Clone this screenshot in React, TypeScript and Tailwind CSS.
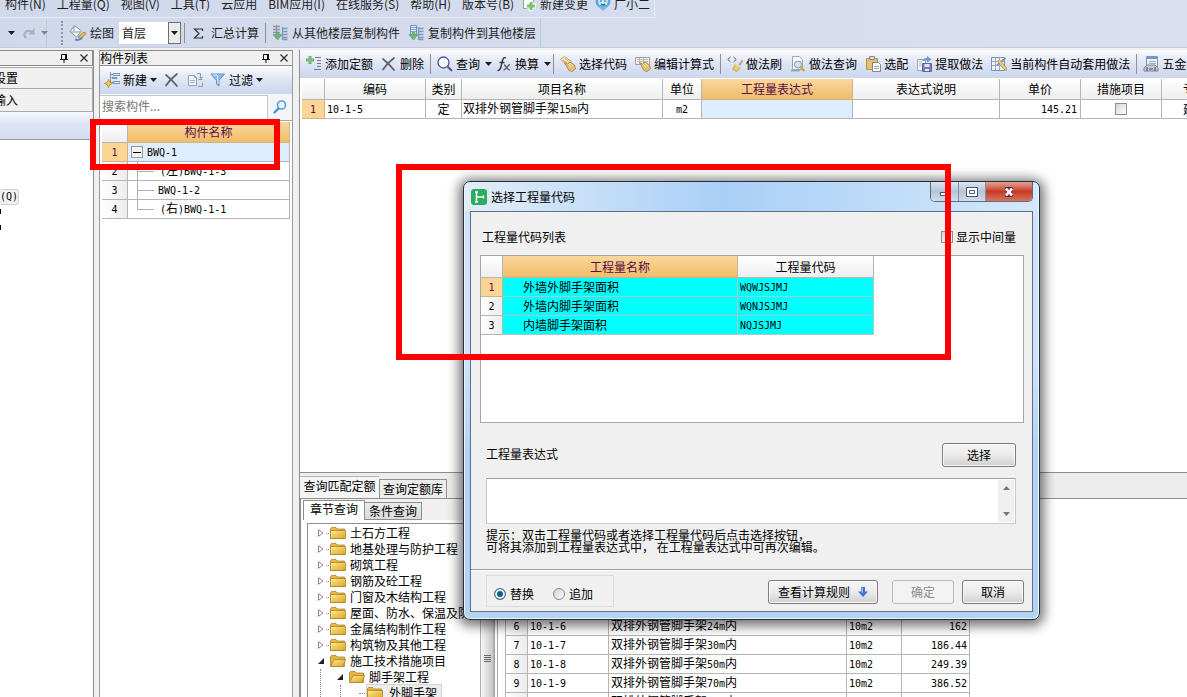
import React from "react";

type Kids = { children?: React.ReactNode };

const HEAD = "h-[21px] border-r border-b border-[#b5b5b5] bg-linear-to-b from-white to-[#eeeeee] p-0 text-center font-normal";
const HEAD_ON = "h-[21px] border-r border-b border-[#c9b48c] bg-linear-to-b from-[#f9d79c] to-[#efbd68] p-0 text-center font-normal text-[#5c0a46]";
const INDEX = "h-[19px] border-r border-b border-[#b5b5b5] bg-linear-to-r from-white to-[#ececec] p-0 text-center font-normal";
const INDEX_ON = "h-[19px] border-r border-b border-[#c9b48c] bg-[#fcd594] p-0 text-center font-normal text-[#5c0a46]";
const CELL = "h-[19px] overflow-hidden border-r border-b border-[#b5b5b5] p-0 whitespace-nowrap";
const BUTTON = "flex h-6 items-center justify-center rounded-[3px] border border-[#7c7c7c] bg-linear-to-b from-[#f5f5f5] via-[#ebebeb] via-50% to-[#cfcfcf] shadow-[inset_0_0_0_1px_#fafafa]";

/* Sets Latin runs in a half-width monospace beside full-width Chinese text. */
function Mixed({ text }: { text: string }) {
  return (
    <>
      {text.split(/([\x20-\x7e]+)/).map((run, i) =>
        i % 2 ? (
          <span key={i} className="font-['DejaVu_Sans_Mono',monospace] text-[10px]">{run}</span>
        ) : (
          run
        ),
      )}
    </>
  );
}

function Icon({ children }: Kids) {
  return (
    <svg viewBox="0 0 16 16" className="h-4 w-4 shrink-0" fill="none" aria-hidden="true">
      {children}
    </svg>
  );
}

const Caret = ({ faded }: { faded?: boolean }) => (
  <svg viewBox="0 0 7 4" className={faded ? "h-1 w-[7px] shrink-0 text-[#7d8593]" : "h-1 w-[7px] shrink-0 text-[#1c1c1c]"} aria-hidden="true">
    <path d="M0 0h7L3.500 4z" fill="currentColor" />
  </svg>
);

const Sep = () => <span className="-mx-0.5 h-5 w-px shrink-0 bg-[#8d9099]" />;

const PinIcon = () => (
  <svg viewBox="0 0 8 10" className="h-[10px] w-2" fill="none" aria-hidden="true">
    <path d="M1.500 6V1.500h5V6M0 6.500h8M4 7v3" stroke="#111" />
    <path d="M5 1h2v5H5z" fill="#111" />
  </svg>
);
const CloseIcon = () => (
  <svg viewBox="0 0 8 8" className="h-2 w-2" fill="none" aria-hidden="true">
    <path d="M.5.5l7 7M7.500.5l-7 7" stroke="#222" strokeWidth="1.100" />
  </svg>
);
const CrossIcon = () => (
  <Icon>
    <path d="M2 3c4 3 7 6 11 11M13 2C9 5 5 9 2 13.500" stroke="#5d6167" strokeWidth="1.700" strokeLinecap="round" />
  </Icon>
);
const AddRowIcon = () => (
  <Icon>
    <path d="M4 0v8M0 4h8" stroke="#69ad71" strokeWidth="3" />
    <path d="M4 1v6M1 4h6" stroke="#8fc795" />
    <path d="M9 1.500h6M11 4.500h4M11 7.500h4M11 10.500h4M8 13.500h7" stroke="#747b85" />
  </Icon>
);
const NewIcon = () => (
  <Icon>
    <path d="M6.500 0v12M7 2.500h2M7 10.500h2" stroke="#8795aa" />
    <path d="M9 1.500h7v2H9zM8 5.500h5v1H8zM9 9.500h7v2H9z" fill="#dbe6f3" stroke="#718cae" strokeWidth=".9" />
    <path d="M4.500 7.500l1.200 2.700L8.500 11.500l-2.800 1.300-1.200 2.700-1.200-2.700L.5 11.500l2.800-1.300z" fill="#f6c844" stroke="#b48b25" strokeWidth=".8" />
  </Icon>
);
const CopyIcon = () => (
  <Icon>
    <path d="M1.500 3.500h6l2 2v8h-8zM7.500 3.500v2h2" fill="#eef3f8" stroke="#93a2b7" />
    <path d="M3 8.500h5M3 10.500h5" stroke="#a7b3c3" />
    <path d="M10 1.500h3.500V5M11 14.500h4.500v-4M11.500 7.500h4" stroke="#8ba0bd" />
    <path d="M12 5h4l-2 2.500z" fill="#8ba0bd" />
  </Icon>
);
const FunnelIcon = () => (
  <Icon>
    <path d="M1 2h13.500L9 8.500v5.500L6.500 12V8.500z" fill="#8db9e9" stroke="#6790bf" />
    <path d="M3 3h4l1 5v4" stroke="#d9ecff" />
  </Icon>
);
const SearchIcon = () => (
  <Icon>
    <circle cx="6.500" cy="6.500" r="5.500" fill="#f4f9ff" stroke="#4a569a" strokeWidth="1.300" />
    <path d="M10.500 10.500l4.500 4.500" stroke="#4d5a91" strokeWidth="2" />
  </Icon>
);
const FxIcon = () => (
  <Icon>
    <path d="M1.500 14.500c3 .5 3.500-3 4.500-8s2-5.500 4-4.500M3.500 6.500h5" stroke="#31353c" strokeWidth="1.400" />
    <path d="M8 9c2 0 3 5 6 5M14 8.500c-2 0-4 5.500-6.500 5.500" stroke="#596069" strokeWidth="1.300" />
  </Icon>
);
const HandIcon = ({ sheet }: { sheet?: boolean }) => (
  <Icon>
    {sheet ? (
      <>
        <path d="M.5 1.500h14v7H.5z" fill="#f0f1ea" stroke="#a0a099" />
        <path d="M2 3.500h11M2 5.500h11M4.500 2v6M8.500 2v6" stroke="#bcbfae" />
      </>
    ) : (
      <>
        <path d="M.5 3.500l4-3 7 5-4 4z" fill="#f3e3b2" stroke="#c2a46a" />
        <path d="M3 4l4 3M5 2.500l4 3" stroke="#c9b07a" />
      </>
    )}
    <path d="M4.500 6.500l3 1.500 2.500-2 4.500 3 1 4-3.500 2.500-3-1z" fill="#e9bf72" stroke="#b18a4d" />
    <path d="M8 8l3 3M10 7l3 3" stroke="#fae4b5" />
  </Icon>
);
const BrushIcon = () => (
  <Icon>
    <path d="M3.500 1L.8 3.500l2.700 2.500M6.500 1l2.700 2.500L6.500 6" stroke="#555b63" />
    <path d="M15.500 4.500l-3.500 5" stroke="#c3a27d" strokeWidth="2" />
    <path d="M8.500 8l5 3-3.500 4.500-4.500-2z" fill="#f2cb65" stroke="#c9a450" />
    <path d="M8.500 8l5 3" stroke="#d9dde6" strokeWidth="2" />
  </Icon>
);
const PageSearchIcon = () => (
  <Icon>
    <path d="M2.500.5h7l3 3v10h-10z" fill="#f8fafc" stroke="#9ba6b4" />
    <path d="M1 14.500h9" stroke="#98afa5" strokeWidth="2" />
    <circle cx="8" cy="8.500" r="3.500" fill="#cde6f5" stroke="#8196a8" />
    <path d="M10.500 11l4 4" stroke="#d1a342" strokeWidth="2.200" />
  </Icon>
);
const PasteIcon = () => (
  <Icon>
    <path d="M1.500 2.500h11v11h-11z" fill="#e6c06c" stroke="#b8924a" />
    <path d="M4.500.5h5v3h-5z" fill="#d9dee5" stroke="#838891" />
    <path d="M7.500 6.500h6l2 2v7h-8z" fill="#f7f9fb" stroke="#7f8793" />
    <path d="M9 10.500h5M9 12.500h5" stroke="#aab0ba" />
  </Icon>
);
const ExtractIcon = () => (
  <Icon>
    <path d="M1.500 3.500h8v11h-8z" fill="#fafbfd" stroke="#a1a9b6" />
    <path d="M3 6h3M3 8h3M3 10h3" stroke="#adb5c1" />
    <path d="M6.500 7.500h9v8h-9z" fill="#7080b4" stroke="#5d6a9b" />
    <path d="M8.500 8h5v3h-5zM9 13h4v2H9z" fill="#e4e8f4" />
    <path d="M6 5.500c1-3 3-3.500 5-3.500V0l4.500 3.500L11 6.500v-2c-2 0-3 0-5 1z" fill="#7394c9" />
  </Icon>
);
const GridPenIcon = () => (
  <Icon>
    <path d="M.5 1.500h13v13H.5z" fill="#eef4fb" stroke="#7392bb" />
    <path d="M1 5.500h12M1 9.500h12M4.500 2v12M8.500 2v12" stroke="#92abc9" />
    <path d="M14.500 2L6 9" stroke="#74839f" strokeWidth="1.500" />
    <path d="M6.500 5l2-1.500 6.500 8 .5 3-2.800-1.500z" fill="#eccf73" stroke="#a98f4e" strokeWidth=".8" />
  </Icon>
);
const CalcIcon = () => (
  <Icon>
    <path d="M3.500.5h11v10h-11z" fill="#eaf1fa" stroke="#7e94b4" />
    <path d="M4 2h10" stroke="#6f99cf" strokeWidth="2" />
    <path d="M6 5.500h7M6 7.500h7" stroke="#9cadc3" />
    <path d="M1 12l3-3h8l3 3v3H1z" fill="#c5cbd5" stroke="#7c8490" />
    <path d="M4 11v4M12 11v4M6 13h4" stroke="#6b727d" strokeWidth="1.500" />
  </Icon>
);
const PaintIcon = () => (
  <svg viewBox="0 0 18 16" className="h-4 w-[18px] shrink-0" fill="none" aria-hidden="true">
    <path d="M5.500.5l7 5.500-5 6-6.500-5.500z" fill="#f3f6fa" stroke="#8796aa" />
    <path d="M5 1v5M1.500 7L11 7" stroke="#8796aa" />
    <path d="M9 12l6-5 2 1.500-5 5.500z" fill="#e6bf4f" stroke="#a98b3d" />
    <path d="M6 14.500c3 1 6 0 7-2" stroke="#5d88c0" strokeWidth="2" />
  </svg>
);
const FloorIcon = ({ out }: { out?: boolean }) => (
  <Icon>
    {out ? (
      <>
        <path d="M2.500.5h6v9h-6z" fill="#e5effa" stroke="#6d93c0" />
        <path d="M3 2.500h5M3 4.500h5M3 6.500h5" stroke="#7fa2cd" />
      </>
    ) : (
      <path d="M1 1.500h7M1 4.500h7M1 7.500h7M4.500 0v9" stroke="#8f98a3" strokeWidth="1.500" />
    )}
    <path d="M1 9.500h3v-2h3v2h3L5.500 15z" fill="#71b47d" stroke="#5f9f6e" strokeWidth=".7" />
    <path d="M10.500 2v13M11 3.500h4.500M11 6.500h4.500M11 9.500h4.500M11 12.500h4.500M11 14.500h4.500" stroke="#7c9abd" strokeWidth="1.300" />
  </Icon>
);
const ChangeIcon = () => (
  <Icon>
    <path d="M2.500-1h7l3 3v10.500h-10z" fill="#fafcf8" stroke="#8ea38b" />
    <path d="M10 5v10M5 10h10" stroke="#fff" strokeWidth="5" />
    <path d="M10 6v8M6 10h8" stroke="#79c267" strokeWidth="3" />
  </Icon>
);
const MascotIcon = () => (
  <Icon>
    <circle cx="8" cy="5" r="7.500" fill="#5aa9de" />
    <path d="M3 4c2-3 8-3 10 0l-1 5H4z" fill="#c6e8f8" />
    <path d="M5 5h2M9 5h2M6 8c1 1 3 1 4 0" stroke="#246b9e" strokeWidth="1.200" />
    <path d="M3 10.500l5 4.500 5-4.500" fill="#79b9e2" />
  </Icon>
);

function Folder({ open }: { open?: boolean }) {
  return (
    <svg viewBox="0 0 16 12" className="h-3 w-4 shrink-0" fill="none" aria-hidden="true">
      <defs>
        <linearGradient id="gold" x1="0" y1="0" x2="1" y2="1">
          <stop offset="0" stopColor="#fdeb9c" />
          <stop offset="1" stopColor="#dfa41c" />
        </linearGradient>
      </defs>
      <path d="M.5 11.500V1.500l1-1h4.500l1.500 1.500h7v9.500z" fill="#e5b83c" stroke="#a9852c" strokeWidth=".8" />
      {open ? (
        <path d="M4 4.500h11.700l-3 7H.7z" fill="url(#gold)" stroke="#a9852c" strokeWidth=".8" />
      ) : (
        <path d="M.5 3.500h15v8H.5z" fill="url(#gold)" stroke="#a9852c" strokeWidth=".8" />
      )}
    </svg>
  );
}

function Tool({ icon, label, menu }: { icon: React.ReactNode; label: string; menu?: boolean }) {
  return (
    <button className={menu ? "-mr-1 flex shrink-0 items-center gap-[3px]" : "flex shrink-0 items-center gap-[3px]"}>
      {icon}
      <span>{label}</span>
      {menu && <span className="pl-0.5"><Caret /></span>}
    </button>
  );
}

function TopBars() {
  const menus = ["构件(N)", "工程量(Q)", "视图(V)", "工具(T)", "云应用", "BIM应用(I)", "在线服务(S)", "帮助(H)", "版本号(B)"];
  return (
    <header className="shrink-0 border-b border-[#c3cbdc] bg-linear-to-r from-[#d0d8eb] to-[#d9e0ef] text-[#1e1e1e]">
      <nav className="flex h-[18px] w-max items-start gap-[11px] border-r border-b border-[#e7ecf6] pr-1 pl-[5px] leading-2">
        {menus.map((m) => (
          <button key={m} className="h-2 leading-2 whitespace-nowrap">{m}</button>
        ))}
        <button className="-mr-1 -ml-1 flex h-2 items-center gap-[3px] leading-2 whitespace-nowrap"><ChangeIcon />新建变更</button>
        <button className="flex h-2 items-center gap-[3px] leading-2 whitespace-nowrap"><MascotIcon />广小二</button>
      </nav>
      <div className="flex h-[29px] w-max items-center border-r border-[#bcc5d9] pt-px pr-1">
        <div className="flex h-full w-[47px] items-center gap-2 border-r border-[#bfc8dc] pl-2">
          <button aria-label="撤销"><Caret /></button>
          <button aria-label="恢复" className="flex items-center gap-1.5">
            <svg viewBox="0 0 12 12" className="h-3 w-3" fill="none" aria-hidden="true">
              <path d="M3 11C-1 6 4 2 9 5" stroke="#a9b1c0" strokeWidth="2.200" />
              <path d="M11.500 1v6.500H5.500z" fill="#a9b1c0" />
            </svg>
            <Caret faded />
          </button>
        </div>
        <span className="mr-1.5 ml-[14px] h-6 border-l-2 border-dotted border-[#8e99b0]" />
        <button className="flex items-center gap-[3px]"><PaintIcon />绘图</button>
        <div className="relative mx-[5px] h-[22px] w-[62px] bg-white">
          <select aria-label="楼层" className="h-full w-full appearance-none pl-[3px] text-[12px] outline-none">
            <option>首层</option>
          </select>
          <span className="pointer-events-none absolute top-0 right-0 flex h-[22px] w-[13px] items-center justify-center border border-[#6e6e6e] bg-[#ececec]"><Caret /></span>
        </div>
        <div className="flex items-center gap-2">
          <Sep />
          <button className="flex items-center gap-[7px] pl-0.5">
            <svg viewBox="0 0 11 11" className="h-[11px] w-[11px]" fill="none" aria-hidden="true">
              <path d="M9.500 3V1H1.500L6 5.500 1.500 10h8V8" stroke="#333" strokeWidth="1.200" />
            </svg>
            汇总计算
          </button>
          <Sep />
          <button className="flex items-center gap-1"><FloorIcon />从其他楼层复制构件</button>
          <button className="flex items-center gap-1"><FloorIcon out />复制构件到其他楼层</button>
        </div>
      </div>
    </header>
  );
}

function LeftDock() {
  return (
    <aside className="w-[94px] shrink-0 overflow-hidden border-r border-[#8f8f8f] bg-white">
      <div className="flex h-4 items-center justify-end gap-3 border border-l-0 border-[#8a8a8a] bg-[#efefef] pr-1">
        <button aria-label="固定"><PinIcon /></button>
        <button aria-label="关闭"><CloseIcon /></button>
      </div>
      <button className="mt-px flex h-[22px] w-full items-center border border-l-0 border-[#a9a9a9] bg-[#f0f0f0]"><span className="-ml-1.5">设置</span></button>
      <button className="flex h-[23px] w-full items-center border-r border-b border-[#a9a9a9] bg-[#f0f0f0]"><span className="-ml-1.5">输入</span></button>
      <div className="h-7 border-b border-[#8f99ad] bg-linear-to-b from-[#f7f9fd] via-[#dfe6f6] via-40% to-[#d3dcf0]" />
      <div className="pt-[49px]">
        <button className="flex h-4 w-[19px] items-center rounded-[3px] border border-l-0 border-[#cfcfcf] bg-[#f1f1f1] font-['DejaVu_Sans_Mono',monospace] text-[10px]">(Q)</button>
        <div className="mt-1 h-[5px] w-px bg-black" />
        <div className="mt-[11px] h-[5px] w-px bg-black" />
      </div>
    </aside>
  );
}

function Components() {
  const rows = ["(左)BWQ-1-3", "BWQ-1-2", "(右)BWQ-1-1"];
  return (
    <section className="w-[194px] shrink-0 border-r border-l border-[#9a9a9a] bg-white">
      <div className="flex h-4 items-center border-y border-[#8a8a8a] bg-[#efefef]">
        <h2 className="flex-1">构件列表</h2>
        <div className="flex items-center gap-[10px] pr-1">
          <button aria-label="固定"><PinIcon /></button>
          <button aria-label="关闭"><CloseIcon /></button>
        </div>
      </div>
      <div className="flex h-7 items-center gap-[7px] bg-linear-to-b from-[#fafbfe] via-[#dde4f4] to-[#ccd6ed] pl-1">
        <button className="flex items-center gap-[3px]"><NewIcon />新建<Caret /></button>
        <button aria-label="删除"><CrossIcon /></button>
        <button aria-label="复制"><CopyIcon /></button>
        <button className="flex items-center gap-[3px]"><FunnelIcon />过滤<Caret /></button>
      </div>
      <div className="flex h-[27px] items-center border-b border-[#aaa] bg-[#f3f5f9]">
        <input aria-label="搜索构件" placeholder="搜索构件..." className="h-[25px] w-0 flex-1 border-y border-r border-[#c3c8d0] bg-white px-0.5 pb-1 placeholder:text-[#777]" />
        <button aria-label="搜索" className="flex w-6 justify-center">
          <svg viewBox="0 0 14 14" className="h-[14px] w-[14px]" fill="none" aria-hidden="true">
            <circle cx="8.500" cy="5" r="4" stroke="#49a3df" strokeWidth="1.600" />
            <path d="M5.500 8.500l-4 4" stroke="#3b8fce" strokeWidth="2.200" strokeLinecap="round" />
          </svg>
        </button>
      </div>
      <table className="mt-px ml-0.5 w-[188px] table-fixed border-separate border-spacing-0">
        <colgroup><col className="w-[26px]" /><col /></colgroup>
        <thead><tr><th className={HEAD} /><th className={HEAD_ON}>构件名称</th></tr></thead>
        <tbody>
          <tr>
            <th className={INDEX_ON}><Mixed text="1" /></th>
            <td className={CELL + " bg-[#dfeefe]"}>
              <div className="flex items-center gap-1 pl-[3px]">
                <button aria-label="折叠" className="flex h-3 w-3 items-center justify-center border border-[#999] bg-[#f2f2f2]"><span className="h-px w-2 bg-black" /></button>
                <span><Mixed text="BWQ-1" /></span>
              </div>
            </td>
          </tr>
          {rows.map((r, i) => (
            <tr key={r}>
              <th className={INDEX}><Mixed text={String(i + 2)} /></th>
              <td className={CELL}>
                <div className="flex h-[18px] items-center pl-[9px]">
                  <span className={i === 2 ? "h-[10px] self-start border-l border-[#b0b0b0]" : "h-full border-l border-[#b0b0b0]"} />
                  <span className="h-px w-4 bg-[#b0b0b0]" />
                  <span className={i === 1 ? "pl-1" : "pl-1.5"}><Mixed text={r} /></span>
                </div>
              </td>
            </tr>
          ))}
        </tbody>
      </table>
    </section>
  );
}

function QuotaToolbar() {
  return (
    <div className="flex h-7 shrink-0 items-center gap-2 overflow-hidden bg-linear-to-b from-[#fafbfe] via-[#dde4f4] to-[#ccd6ed] pl-1.5 whitespace-nowrap">
      <Tool icon={<AddRowIcon />} label="添加定额" />
      <Tool icon={<CrossIcon />} label="删除" />
      <Sep />
      <Tool icon={<SearchIcon />} label="查询" menu />
      <Tool icon={<FxIcon />} label="换算" menu />
      <Sep />
      <Tool icon={<HandIcon />} label="选择代码" />
      <Tool icon={<HandIcon sheet />} label="编辑计算式" />
      <Sep />
      <Tool icon={<BrushIcon />} label="做法刷" />
      <Tool icon={<PageSearchIcon />} label="做法查询" />
      <Tool icon={<PasteIcon />} label="选配" />
      <Tool icon={<ExtractIcon />} label="提取做法" />
      <Tool icon={<GridPenIcon />} label="当前构件自动套用做法" />
      <Sep />
      <Tool icon={<CalcIcon />} label="五金手册" />
    </div>
  );
}

function QuotaTable() {
  return (
    <div className="min-h-0 flex-1 overflow-hidden border-b border-[#8f8f8f] bg-white pt-px pl-0.5">
      <table className="w-[927px] table-fixed border-separate border-spacing-0">
        <colgroup>
          <col className="w-[23px]" /><col className="w-[101px]" /><col className="w-[36px]" /><col className="w-[201px]" /><col className="w-[39px]" />
          <col className="w-[151px]" /><col className="w-[147px]" /><col className="w-[81px]" /><col className="w-[81px]" /><col className="w-[67px]" />
        </colgroup>
        <thead>
          <tr>
            <th className={HEAD} />
            <th className={HEAD}>编码</th>
            <th className={HEAD}>类别</th>
            <th className={HEAD}>项目名称</th>
            <th className={HEAD}>单位</th>
            <th className={HEAD_ON}>工程量表达式</th>
            <th className={HEAD}>表达式说明</th>
            <th className={HEAD}>单价</th>
            <th className={HEAD}>措施项目</th>
            <th className={HEAD}>专业</th>
          </tr>
        </thead>
        <tbody>
          <tr>
            <th className={INDEX_ON}><Mixed text="1" /></th>
            <td className={CELL + " pl-0.5"}><Mixed text="10-1-5" /></td>
            <td className={CELL + " text-center"}>定</td>
            <td className={CELL + " pl-px"}><Mixed text="双排外钢管脚手架15m内" /></td>
            <td className={CELL + " text-center"}><Mixed text="m2" /></td>
            <td className={CELL + " bg-[#dfeefe]"} />
            <td className={CELL} />
            <td className={CELL + " pr-[3px] text-right"}><Mixed text="145.21" /></td>
            <td className={CELL}>
              <input type="checkbox" aria-label="措施项目" className="mx-auto block h-3 w-3 appearance-none border border-[#8f8f8f] bg-linear-to-br from-[#d5d5d5] to-white" />
            </td>
            <td className={CELL + " text-center"}>建筑</td>
          </tr>
        </tbody>
      </table>
    </div>
  );
}

function Tree() {
  const items = ["土石方工程", "地基处理与防护工程", "砌筑工程", "钢筋及砼工程", "门窗及木结构工程", "屋面、防水、保温及防腐工程", "金属结构制作工程", "构筑物及其他工程"];
  const opened = (
    <svg viewBox="0 0 6 6" className="h-1.5 w-1.5 shrink-0" aria-hidden="true"><path d="M6 0v6H0z" fill="#222" /></svg>
  );
  return (
    <ul className="mt-[3px] ml-1 h-full overflow-hidden border-t border-l border-[#8f8f8f] bg-white pt-px whitespace-nowrap">
      {items.map((t) => (
        <li key={t} className="flex h-4 items-center pl-[10px]">
          <svg viewBox="0 0 6 8" className="h-2 w-1.5 shrink-0" fill="none" aria-hidden="true"><path d="M.5.7v6.600L5 4z" stroke="#8a8a8a" /></svg>
          <span className="mr-px ml-0.5 w-[3px] shrink-0 border-t border-dotted border-[#888]" />
          <Folder />
          <span className="pl-1">{t}</span>
        </li>
      ))}
      <li className="flex h-4 items-center gap-1.5 pl-[10px]">{opened}<Folder open /><span className="-ml-0.5">施工技术措施项目</span></li>
      <li className="ml-3 border-l border-dotted border-[#888]">
        <div className="flex h-4 items-center gap-1.5 pl-4">{opened}<Folder open /><span className="-ml-0.5">脚手架工程</span></div>
        <div className="ml-[19px] flex h-4 items-center border-l border-dotted border-[#888] pl-[18px]">
          <span className="w-2 border-t border-dotted border-[#888]" />
          <button className="flex items-center gap-1.5 bg-[#ededed] pr-1 outline outline-[#d4d4d4]"><Folder />外脚手架</button>
        </div>
      </li>
    </ul>
  );
}

function QueryPane() {
  const rows = [
    ["6", "10-1-6", "双排外钢管脚手架24m内", "162"],
    ["7", "10-1-7", "双排外钢管脚手架30m内", "186.44"],
    ["8", "10-1-8", "双排外钢管脚手架50m内", "249.39"],
    ["9", "10-1-9", "双排外钢管脚手架70m内", "386.52"],
    ["10", "10-1-10", "双排外钢管脚手架90m内", "520.18"],
  ];
  return (
    <div className="flex h-[224px] shrink-0 flex-col overflow-hidden">
      <div className="flex h-[26px] shrink-0 items-end border-b border-[#8f8f8f] bg-[#ededed] pt-1">
        <button className="h-[22px] w-[79px] border-t border-[#b5b5b5] bg-[#f5f5f5] pb-1 text-center">查询匹配定额</button>
        <button className="h-[19px] w-[68px] border border-b-0 border-[#8f8f8f] bg-[#ececec] text-center">查询定额库</button>
      </div>
      <div className="flex min-h-0 flex-1 bg-white">
        <div className="flex w-[180px] shrink-0 flex-col overflow-hidden border-l border-[#8f8f8f] bg-white pl-0.5">
          <div className="flex h-[21px] shrink-0 items-end bg-[#f0f0f0]">
            <button className="h-5 w-[62px] border border-b-0 border-[#8f8f8f] bg-white pb-1 text-center">章节查询</button>
            <button className="h-[18px] w-[57px] border border-l-0 border-[#8f8f8f] bg-linear-to-b from-[#ededed] to-[#dadada] text-center">条件查询</button>
          </div>
          <Tree />
        </div>
        <div className="flex w-[14px] shrink-0 items-center justify-center border-x border-[#b0b0b0] bg-linear-to-r from-[#f6f6f6] to-[#c8c8c8]">
          <div className="mt-30 flex flex-col gap-px">
            <span className="h-px w-[7px] bg-[#666]" /><span className="h-px w-[7px] bg-[#666]" /><span className="h-px w-[7px] bg-[#666]" /><span className="h-px w-[7px] bg-[#666]" />
          </div>
        </div>
        <div className="min-w-0 flex-1 border-l-4 border-double border-[#a5a5a5] pt-[118px]">
          <table className="ml-[7px] w-[465px] table-fixed border-separate border-spacing-0 border-l border-[#b5b5b5]">
            <colgroup><col className="w-[22px]" /><col className="w-[81px]" /><col className="w-[238px]" /><col className="w-[55px]" /><col /></colgroup>
            <tbody>
              {rows.map(([n, code, name, price]) => (
                <tr key={n}>
                  <th className={INDEX}><Mixed text={n} /></th>
                  <td className={CELL + " pl-0.5"}><Mixed text={code} /></td>
                  <td className={CELL + " pl-0.5"}><Mixed text={name} /></td>
                  <td className={CELL + " pl-0.5"}><Mixed text="10m2" /></td>
                  <td className={CELL + " pr-0.5 text-right"}><Mixed text={price} /></td>
                </tr>
              ))}
            </tbody>
          </table>
        </div>
      </div>
    </div>
  );
}

function CodeDialog() {
  const codes = [["外墙外脚手架面积", "WQWJSJMJ"], ["外墙内脚手架面积", "WQNJSJMJ"], ["内墙脚手架面积", "NQJSJMJ"]];
  const cyan = "h-[19px] border-r border-b border-[#a9c9c9] bg-[#00ffff] p-0";
  const radio = "h-3 w-3 appearance-none rounded-full border border-[#8a8a8a] bg-linear-to-br from-[#cfcfcf] to-white checked:border-[#54708a] checked:bg-none checked:bg-[#125f8c] checked:shadow-[inset_0_0_0_2px_#e8f1f7]";
  return (
    <div role="dialog" aria-label="选择工程量代码" className="absolute top-[181px] left-[463px] w-[577px] rounded-[7px] border border-[#22303f] bg-linear-to-b from-[#cfe4fa] from-40% to-[#b4d3f4] to-60% px-1.5 pb-[7px] shadow-[0_2px_12px_4px_rgba(0,0,0,0.55),inset_0_0_0_1px_#eef7ff]">
      <div className="-mx-[5px] flex h-[29px] items-start rounded-t-md bg-linear-to-r from-[#e2edf8] via-[#a9cff6] via-45% to-[#d5e8fb] pr-[5px] pl-1.5">
        <div className="flex h-full flex-1 items-center gap-1">
          <svg viewBox="0 0 16 16" className="h-4 w-4" fill="none" aria-hidden="true">
            <rect width="16" height="16" rx="3" fill="#2cab61" />
            <path d="M4 3h3M5.500 3v10M4 13h3M6 8h7M12.500 6.500v3" stroke="#fff" strokeWidth="1.500" />
          </svg>
          <h2>选择工程量代码</h2>
        </div>
        <div className="flex h-5 overflow-hidden rounded-b-[5px] border border-t-0 border-[#5b6c82]">
          <button aria-label="最小化" className="flex w-7 items-center justify-center border-r border-[#7f90a6] bg-linear-to-b from-[#dce5ef] via-[#b6c5d5] to-[#d0deeb]"><span className="mt-1 h-1 w-[10px] border border-[#4b5a6e] bg-white" /></button>
          <button aria-label="最大化" className="flex w-[27px] items-center justify-center border-r border-[#7f90a6] bg-linear-to-b from-[#dce5ef] via-[#b6c5d5] to-[#d0deeb]">
            <svg viewBox="0 0 12 10" className="h-[10px] w-3" fill="none" aria-hidden="true"><path d="M.5.5h11v9H.5zM3.500 3.500h5v3h-5z" fill="#fff" stroke="#4b5a6e" /></svg>
          </button>
          <button aria-label="关闭" className="flex w-[46px] items-center justify-center bg-linear-to-b from-[#e0a294] via-[#c43a25] to-[#d9745c]">
            <svg viewBox="0 0 12 10" className="h-[10px] w-3" fill="none" aria-hidden="true">
              <path d="M2 1h2.500L6 3l1.500-2H10M2 9h2.500L6 7l1.500 2H10M3 1l5.500 8M9 1L3.500 9" stroke="#5e3640" strokeWidth="3.200" />
              <path d="M3 1.500l6 7M9 1.500l-6 7" stroke="#fff" strokeWidth="2.600" />
            </svg>
          </button>
        </div>
      </div>
      <div className="border border-[#5d7087] bg-[#f0f0f0]">
        <div className="flex h-[43px] items-center justify-between pt-1.5 pr-4 pl-[11px]">
          <span>工程量代码列表</span>
          <label className="flex items-center gap-[3px]">
            <input type="checkbox" className="h-3 w-3 appearance-none border border-[#8f8f8f] bg-linear-to-br from-[#d5d5d5] to-white" />
            显示中间量
          </label>
        </div>
        <div className="mr-2 ml-[9px] h-[168px] border border-[#a6a6a6] bg-white">
          <table className="w-[393px] table-fixed border-separate border-spacing-0">
            <colgroup><col className="w-[22px]" /><col className="w-[235px]" /><col /></colgroup>
            <thead><tr><th className={HEAD + " h-[22px]"} /><th className={HEAD_ON}>工程量名称</th><th className={HEAD}>工程量代码</th></tr></thead>
            <tbody>
              {codes.map(([name, code], i) => (
                <tr key={code}>
                  <th className={i === 0 ? INDEX_ON : INDEX}><Mixed text={String(i + 1)} /></th>
                  <td className={cyan + " pl-5"}>{name}</td>
                  <td className={cyan + " pl-0.5"}><Mixed text={code} /></td>
                </tr>
              ))}
            </tbody>
          </table>
        </div>
        <div className="flex h-[55px] items-center justify-between pt-2 pr-4 pl-[15px]">
          <label htmlFor="expression" className="pb-0.5">工程量表达式</label>
          <button className={BUTTON + " w-[74px]"}>选择</button>
        </div>
        <div className="mr-4 ml-[15px] flex h-[46px] border border-[#c9c9c9] border-t-[#9f9f9f] bg-white">
          <textarea id="expression" className="w-0 flex-1 resize-none outline-none" />
          <div className="my-px mr-px flex w-4 flex-col items-center justify-between bg-[#f0f0f0] py-1.5">
            <svg viewBox="0 0 7 4" className="h-1 w-[7px]" aria-hidden="true"><path d="M0 4h7L3.500 0z" fill="#777" /></svg>
            <svg viewBox="0 0 7 4" className="h-1 w-[7px]" aria-hidden="true"><path d="M0 0h7L3.500 4z" fill="#777" /></svg>
          </div>
        </div>
        <p className="h-[45px] pt-[5px] pl-[15px] leading-3">
          提示：双击工程量代码或者选择工程量代码后点击选择按钮，
          <br />
          可将其添加到工程量表达式中， 在工程量表达式中可再次编辑。
        </p>
        <div className="flex h-[42px] items-center border-t border-[#9c9c9c] pr-2 pl-[15px] shadow-[inset_0_1px_0_#fff]">
          <fieldset className="mr-auto flex h-8 w-32 items-center border border-[#dcdcdc] pt-1.5 pl-[7px]">
            <label className="flex w-[59px] items-center gap-1"><input type="radio" name="mode" defaultChecked className={radio} />替换</label>
            <label className="flex items-center gap-1"><input type="radio" name="mode" className={radio} />追加</label>
          </fieldset>
          <div className="flex items-center gap-2 pt-0.5">
            <button className={BUTTON + " mr-1.5 w-[110px] gap-2"}>
              查看计算规则
              <svg viewBox="0 0 10 10" className="h-[10px] w-[10px]" aria-hidden="true"><path d="M3 0h4v4.500h3L5 10 0 4.500h3z" fill="#4472d4" /><path d="M3.500.5h1.500v5h-1.500z" fill="#9bb8f2" /></svg>
            </button>
            <button disabled className="flex h-6 w-[62px] items-center justify-center rounded-[3px] border border-[#b9b9b9] bg-[#f3f3f3] text-[#8c8c8c]">确定</button>
            <button className={BUTTON + " w-[62px]"}>取消</button>
          </div>
        </div>
      </div>
    </div>
  );
}

export default function App() {
  return (
    <div className="relative flex h-screen flex-col overflow-hidden bg-[#f0f0f0] font-['Noto_Sans_CJK_SC',sans-serif] text-[12px] leading-4 text-black">
      <TopBars />
      <main className="flex min-h-0 flex-1 gap-[5px] pt-0.5">
        <LeftDock />
        <Components />
        <section className="ml-px flex min-w-0 flex-1 flex-col border-l border-[#8f8f8f]">
          <QuotaToolbar />
          <QuotaTable />
          <QueryPane />
        </section>
      </main>
      <CodeDialog />
      <div className="pointer-events-none absolute top-[119px] left-[90px] h-[51px] w-[190px] border-6 border-[#f00]" />
      <div className="pointer-events-none absolute top-[164px] left-[396px] h-[196px] w-[555px] border-6 border-[#f00]" />
    </div>
  );
}
